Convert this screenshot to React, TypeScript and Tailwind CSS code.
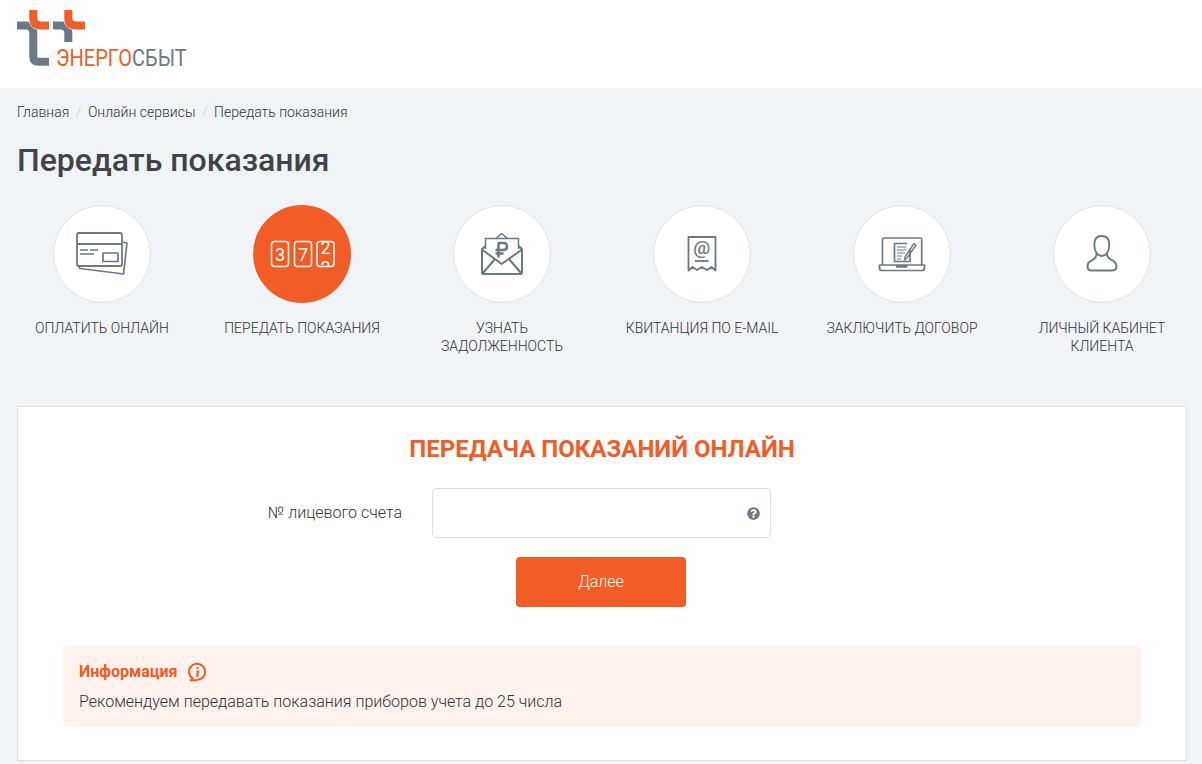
import { ReactNode } from 'react';
import { FaQuestionCircle } from 'react-icons/fa';

function Logo() {
    return (
        <div className="relative w-[172px] h-[60px]">
            <svg width="90" height="60" viewBox="0 0 90 60" fill="none" className="block">
                <path d="M0 15.500H9Q16.300 15.500 16.300 23V47Q16.300 51.700 22 51.700H32" stroke="#6c7883" strokeWidth="8" />
                <path d="M16.300 0V8Q16.300 15.500 24 15.500H32" stroke="#ffffff" strokeWidth="9.500" />
                <path d="M16.300 0V8Q16.300 15.500 24 15.500H32" stroke="#f25c26" strokeWidth="8" />
                <path d="M36 15.500H44Q51.300 15.500 51.300 23V32" stroke="#6c7883" strokeWidth="8" />
                <path d="M51.300 0V8Q51.300 15.500 59 15.500H68" stroke="#ffffff" strokeWidth="9.500" />
                <path d="M51.300 0V8Q51.300 15.500 59 15.500H68" stroke="#f25c26" strokeWidth="8" />
            </svg>
            <div className="absolute left-[39px] top-[35px] origin-left scale-x-[0.87] text-[23px] leading-[28px] font-normal whitespace-nowrap text-[#6c7883]">
                <span className="text-[#f25c26]">ЭНЕРГО</span>СБЫТ
            </div>
        </div>
    );
}

function Icon({ children }: { children: ReactNode }) {
    return (
        <svg width="70" height="70" viewBox="0 0 70 70" fill="none" stroke="currentColor" strokeWidth="1.500" strokeLinejoin="round">
            {children}
        </svg>
    );
}

function CardIcon() {
    return (
        <Icon>
            <rect x="10" y="14" width="45" height="33" rx="2" strokeWidth="1.800" />
            <path d="M10 25H55" strokeWidth="2.200" />
            <path d="M55 23L60 24L56.500 55L13 49.500L11.500 47" strokeWidth="1.700" />
            <path d="M13 31H21M23 31H31M13 35H27" />
            <rect x="36" y="34" width="15" height="8.500" strokeWidth="1.700" />
        </Icon>
    );
}

function MeterIcon() {
    return (
        <Icon>
            <defs>
                <clipPath id="lastDigit">
                    <rect x="50" y="22" width="18" height="26" rx="3" />
                </clipPath>
            </defs>
            <rect x="4.500" y="22.500" width="17" height="25" rx="3" />
            <rect x="27.500" y="22.500" width="17" height="25" rx="3" />
            <rect x="50" y="22.500" width="17" height="25" rx="3" />
            <g fill="currentColor" stroke="none" fontSize="18" fontWeight="400" textAnchor="middle" fontFamily="Roboto, sans-serif">
                <text x="13" y="41.500">3</text>
                <text x="36" y="41.500">7</text>
                <g clipPath="url(#lastDigit)">
                    <text x="58.500" y="35">2</text>
                    <text x="58.500" y="54.500">2</text>
                </g>
            </g>
        </Icon>
    );
}

function EnvelopeIcon() {
    return (
        <Icon>
            <path d="M18.500 30V19.500H51.500V30" strokeWidth="1.500" />
            <path d="M29 19.500L34.700 14.500L40.500 19.500" strokeWidth="1.500" />
            <path d="M18.500 27L15 30V53.500Q15 55 16.500 55H53.500Q55 55 55 53.500V30L51.500 27" strokeWidth="2" />
            <path d="M15 30.500L34.700 45L55 30.500" strokeWidth="2" />
            <path d="M16 54L28 40M54 54L42 40" strokeWidth="2" />
            <path d="M31.500 38.500V24H36.500Q40 24 40 27.500Q40 31 36.500 31H28.500M28.500 34.500H36.500" strokeWidth="2.500" />
        </Icon>
    );
}

function ReceiptIcon() {
    return (
        <Icon>
            <path d="M21.500 51.500V18H48.500V51.500L44.500 48L40 51L35 48L30 51L25.500 48Z" strokeWidth="1.800" />
            <text x="34.800" y="35" fill="currentColor" stroke="none" fontSize="19" fontWeight="500" textAnchor="middle" fontFamily="Roboto, sans-serif">@</text>
            <path d="M28 42H41.500" strokeWidth="1.800" />
        </Icon>
    );
}

function LaptopIcon() {
    return (
        <Icon>
            <path d="M15.500 46V20.500Q15.500 19 17 19H53Q54.700 19 54.700 20.500V46" strokeWidth="1.700" />
            <path d="M12.500 46H57.500V49Q57.500 51.500 55 51.500H15Q12.500 51.500 12.500 49Z" strokeWidth="1.700" />
            <path d="M29.500 46V48H39.500V46" fill="currentColor" />
            <path d="M43 30V42.500H27.500V24.500H40" strokeWidth="1.700" />
            <path d="M30 28H39M30 31H39M30 34H38M30 37H35M30 40H34" strokeWidth="1.200" />
            <path d="M47 24.500L38 38L37.500 41L40 39L49 26Z" strokeWidth="1.400" />
        </Icon>
    );
}

function UserIcon() {
    return (
        <Icon>
            <path d="M34.700 17C30 17 27.300 20 27.300 25.500C27.300 32 30 37 34.700 37C39.500 37 42.300 32 42.300 25.500C42.300 20 39.500 17 34.700 17Z" strokeWidth="1.900" />
            <path d="M29.500 35C29.500 39.500 26 40.500 23.500 42C21.500 43.200 20.500 45 20.500 47.500C20.500 50.500 22 51.500 25 51.500H44.500C47.500 51.500 49.500 50.500 49.500 47.500C49.500 45 48.500 43.200 46.500 42C44 40.500 40 39.500 40 35" strokeWidth="1.900" />
        </Icon>
    );
}

function InfoIcon() {
    return (
        <svg width="20" height="20" viewBox="0 0 20 20" fill="none" stroke="#f25c26" strokeWidth="2">
            <path d="M10 17.800A8 8 0 1 0 5.500 16.400L3.500 18.300H10" strokeLinejoin="round" />
            <path d="M10.500 5V7M9.500 9.500H11L10 13.800H11.500" strokeWidth="1.900" />
        </svg>
    );
}

const services = [
    { title: 'Оплатить онлайн', icon: <CardIcon /> },
    { title: 'Передать показания', icon: <MeterIcon />, active: true },
    { title: 'Узнать задолженность', icon: <EnvelopeIcon /> },
    { title: 'Квитанция по e-mail', icon: <ReceiptIcon /> },
    { title: 'Заключить договор', icon: <LaptopIcon /> },
    { title: 'Личный кабинет клиента', icon: <UserIcon /> },
];

export default function App() {
    return (
        <div className="h-[764px] overflow-hidden bg-[#f0f4f7] font-['Roboto',sans-serif] font-light text-[#404347]">
            <header className="h-[88px] bg-white pl-[17px] pt-[10px]">
                <Logo />
            </header>

            <main className="pl-[17px] pr-[15px] pt-[15px]">
                <nav className="flex items-center text-sm leading-[18px] font-light text-[#303338]">
                    <span>Главная</span>
                    <span className="mx-[6.500px] text-[#c6ced5]">/</span>
                    <span>Онлайн сервисы</span>
                    <span className="mx-[6.500px] text-[#c6ced5]">/</span>
                    <span>Передать показания</span>
                </nav>

                <h1 className="mt-[19px] text-[32px] leading-[40px] font-medium text-[#404347]">Передать показания</h1>

                <div className="mt-[25px] -mx-[15px] grid grid-cols-6">
                    {services.map((s) => (
                        <div key={s.title} className="flex flex-col items-center px-[20px]">
                            <div
                                className={
                                    s.active
                                        ? 'flex h-[98px] w-[98px] items-center justify-center rounded-full bg-[#f25c26] text-white'
                                        : 'flex h-[98px] w-[98px] items-center justify-center rounded-full border border-[#dbe3ea] bg-white text-[#6c7883]'
                                }
                            >
                                {s.icon}
                            </div>
                            <p className="mt-[16px] text-center text-sm leading-[18px] uppercase text-[#303338]">{s.title}</p>
                        </div>
                    ))}
                </div>

                <section className="mt-[51px] h-[355px] border border-[#d8e2ea] bg-white px-[45px] pt-[26px]">
                    <h2 className="text-center text-2xl leading-[32px] font-bold uppercase text-[#f25c26]">Передача показаний онлайн</h2>

                    <div className="mt-[23px] flex items-center">
                        <label className="w-[339px] text-right text-base text-[#303338]">№ лицевого счета</label>
                        <div className="ml-[30px] flex h-[50px] w-[339px] items-center justify-end rounded-[5px] border border-[#d5e0e8] bg-white pr-[10px]">
                            <FaQuestionCircle className="text-[13px] text-[#6c7883]" />
                        </div>
                    </div>

                    <div className="mt-[19px] ml-[453px]">
                        <button className="h-[50px] w-[170px] rounded-[4px] bg-[#f25c26] text-base font-light text-white">Далее</button>
                    </div>

                    <div className="mt-[39px] h-[81px] rounded-[6px] bg-[#fff2ec] px-[16px] pt-[15px]">
                        <div className="flex items-center gap-[10px]">
                            <span className="text-base leading-[22px] font-bold text-[#f25c26]">Информация</span>
                            <InfoIcon />
                        </div>
                        <p className="mt-[8px] text-base leading-[22px] text-[#303338]">Рекомендуем передавать показания приборов учета до 25 числа</p>
                    </div>
                </section>
            </main>
        </div>
    );
}
